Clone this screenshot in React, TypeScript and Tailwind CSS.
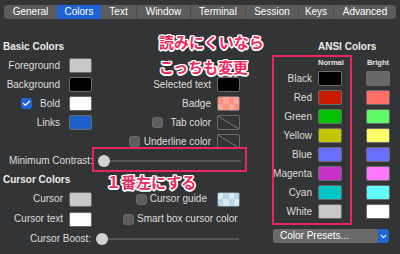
import { Check, ChevronDown } from "lucide-react";

const tabs = [
  { label: "General", w: "w-[53px]" },
  { label: "Colors", w: "w-[44px]", active: true },
  { label: "Text", w: "w-[35px]" },
  { label: "Window", w: "w-[54px]" },
  { label: "Terminal", w: "w-[55px]" },
  { label: "Session", w: "w-[53px]" },
  { label: "Keys", w: "w-[35px]" },
  { label: "Advanced", w: "w-[63px]" },
];

const ansi = [
  { name: "Black", normal: "#000000", bright: "#686868" },
  { name: "Red", normal: "#c91b00", bright: "#ff6e67" },
  { name: "Green", normal: "#00c200", bright: "#5ffa68" },
  { name: "Yellow", normal: "#c7c400", bright: "#fffc67" },
  { name: "Blue", normal: "#6a6eff", bright: "#6a6eff" },
  { name: "Magenta", normal: "#c930c7", bright: "#ff77ff" },
  { name: "Cyan", normal: "#00c5c7", bright: "#60fdff" },
  { name: "White", normal: "#c7c7c7", bright: "#ffffff" },
];

const note =
  "font-['Noto_Sans_CJK_JP',sans-serif] font-bold text-[15px] leading-[15px] text-[#ee2a62] whitespace-nowrap [text-shadow:1.5px_0_#fff,-1.5px_0_#fff,0_1.5px_#fff,0_-1.5px_#fff,1.2px_1.2px_#fff,-1.2px_-1.2px_#fff,1.2px_-1.2px_#fff,-1.2px_1.2px_#fff,0_0_3px_rgba(0,0,0,0.5)]";

function Swatch({ color, wide }: { color: string; wide?: boolean }) {
  return (
    <div
      className={`${wide ? "w-[24px]" : "w-[23px]"} h-[15px] shrink-0 rounded-[2px] border border-[#6b6b6b]`}
      style={{ backgroundColor: color }}
    />
  );
}

function EmptySwatch() {
  return (
    <div className="w-[23px] h-[15px] shrink-0 rounded-[2px] border border-[#6b6b6b] bg-[#333435]">
      <svg width="21" height="13" viewBox="0 0 21 13" className="block">
        <line x1="0" y1="0" x2="21" y2="13" stroke="#7a7a7a" strokeWidth="1" />
      </svg>
    </div>
  );
}

function Checker({ a, b }: { a: string; b: string }) {
  return (
    <div className="w-[23px] h-[15px] shrink-0 rounded-[2px] border border-[#6b6b6b] overflow-hidden grid grid-cols-4 grid-rows-2">
      {[0, 1, 2, 3, 4, 5, 6, 7].map((i) => (
        <div key={i} style={{ backgroundColor: (i + Math.floor(i / 4)) % 2 ? b : a }} />
      ))}
    </div>
  );
}

function Box({ checked }: { checked?: boolean }) {
  if (checked) {
    return (
      <div className="w-[11px] h-[11px] shrink-0 rounded-[3px] bg-[#1f65d9] flex items-center justify-center">
        <Check className="w-[9px] h-[9px] text-white" strokeWidth={3.5} />
      </div>
    );
  }
  return <div className="w-[11px] h-[11px] shrink-0 rounded-[3px] bg-[#5d5d5d] border border-[#6a6a6a]" />;
}

function Slider() {
  return (
    <div className="flex items-center">
      <div className="w-[12px] h-[12px] rounded-full bg-[#d2d2d2] shrink-0" />
      <div className="h-[2px] w-[131px] bg-[#555657] rounded-full" />
    </div>
  );
}

function Row({ left, mid, h = "h-[19px]", lc = "gap-[9px]" }: { left?: React.ReactNode; mid?: React.ReactNode; h?: string; lc?: string }) {
  return (
    <div className={`flex ${h}`}>
      <div className={`w-[100px] flex items-center justify-end pr-[8px] ${lc}`}>{left}</div>
      <div className="w-[160px] flex items-center justify-end pr-[20px] gap-[6px]">{mid}</div>
    </div>
  );
}

export default function App() {
  return (
    <div className="relative w-[400px] h-[254px] overflow-hidden bg-[#333435] text-[#dedede] text-[10px] leading-none font-['Liberation_Sans',Arial,sans-serif]">
      <div className="px-[4px] pt-[5px]">
        <div className="flex h-[14px] rounded-[4px] bg-[#5c5c5c] overflow-hidden">
          {tabs.map((t, i) => (
            <div
              key={t.label}
              className={`${t.w} flex items-center justify-center text-white ${
                t.active ? "bg-[#1f63d6]" : i > 0 && !tabs[i - 1].active ? "border-l border-[#4b4b4b]" : ""
              }`}
            >
              {t.label}
            </div>
          ))}
        </div>
      </div>

      <div className="flex mt-[18px]">
        <div className="w-[260px] flex flex-col">
          <div className="h-[19px] flex items-center pl-[3px] font-bold text-[#ececec]">Basic Colors</div>
          <Row left={<><span>Foreground</span><Swatch color="#c8c8c8" /></>} />
          <Row
            left={<><span>Background</span><Swatch color="#000000" /></>}
            mid={<><span>Selected text</span><Swatch color="#000000" /></>}
          />
          <Row
            left={<><Box checked /><span className="ml-[-1px]">Bold</span><Swatch color="#ffffff" /></>}
            mid={<><span>Badge</span><Checker a="#f8907f" b="#ffa595" /></>}
          />
          <Row
            left={<><span>Links</span><Swatch color="#1b5fc9" /></>}
            mid={<><Box /><span className="ml-[1px]">Tab color</span><EmptySwatch /></>}
          />
          <Row mid={<><Box /><span className="ml-[-2px]">Underline color</span><EmptySwatch /></>} />
          <div className="h-[19px] flex items-center pl-[9px] gap-[5px]">
            <span>Minimum Contrast:</span>
            <Slider />
          </div>
          <div className="h-[19px] flex items-center pl-[3px] font-bold text-[#ececec]">Cursor Colors</div>
          <Row
            h="h-[20px]"
            lc="gap-[6px]"
            left={<><span>Cursor</span><Swatch color="#c8c8c8" /></>}
            mid={<><Box /><span className="ml-[-3px] mr-[4px]">Cursor guide</span><Checker a="#d6ebf4" b="#b8d7e6" /></>}
          />
          <Row
            h="h-[20px]"
            lc="gap-[6px]"
            left={<><span>Cursor text</span><Swatch color="#ffffff" /></>}
            mid={<div className="flex items-center gap-[3px] mr-auto ml-[23px]"><Box /><span>Smart box cursor color</span></div>}
          />
          <div className="h-[20px] flex items-center pl-[30px] gap-[5px]">
            <span>Cursor Boost:</span>
            <Slider />
          </div>
        </div>

        <div className="w-[140px] flex flex-col">
          <div className="h-[19px] flex items-center pl-[58px] font-bold text-[#ececec]">ANSI Colors</div>
          <div className="h-[13px] flex items-center text-[7.5px] font-bold text-[#e6e6e6]">
            <div className="w-[58px]" />
            <div className="w-[24px] text-center">Normal</div>
            <div className="w-[24px] ml-[24px] text-center">Bright</div>
          </div>
          {ansi.map((c) => (
            <div key={c.name} className="h-[19px] flex items-center">
              <div className="w-[52px] text-right">{c.name}</div>
              <div className="ml-[6px]"><Swatch color={c.normal} wide /></div>
              <div className="ml-[24px]"><Swatch color={c.bright} wide /></div>
            </div>
          ))}
          <div className="mt-[8px] ml-[13px] w-[116px] h-[14px] rounded-[3px] bg-[#6a6a6a] flex items-center overflow-hidden">
            <span className="flex-1 pl-[7px] text-white">Color Presets...</span>
            <div className="w-[11px] h-full bg-[#1f63d6] flex items-center justify-center">
              <ChevronDown className="w-[9px] h-[9px] text-white" strokeWidth={3} />
            </div>
          </div>
        </div>
      </div>

      {/* annotations */}
      <div className="absolute left-[272px] top-[55px] w-[80px] h-[170px] border-2 border-[#e8265e]" />
      <div className="absolute left-[92px] top-[147px] w-[155px] h-[25px] border-2 border-[#e8265e]" />
      <div className={`absolute left-[159px] top-[34px] ${note}`}>読みにくいなら</div>
      <div className={`absolute left-[159px] top-[59px] ${note}`}>こっちも変更</div>
      <div className={`absolute left-[106px] top-[174px] ${note}`}>１番左にする</div>
    </div>
  );
}
